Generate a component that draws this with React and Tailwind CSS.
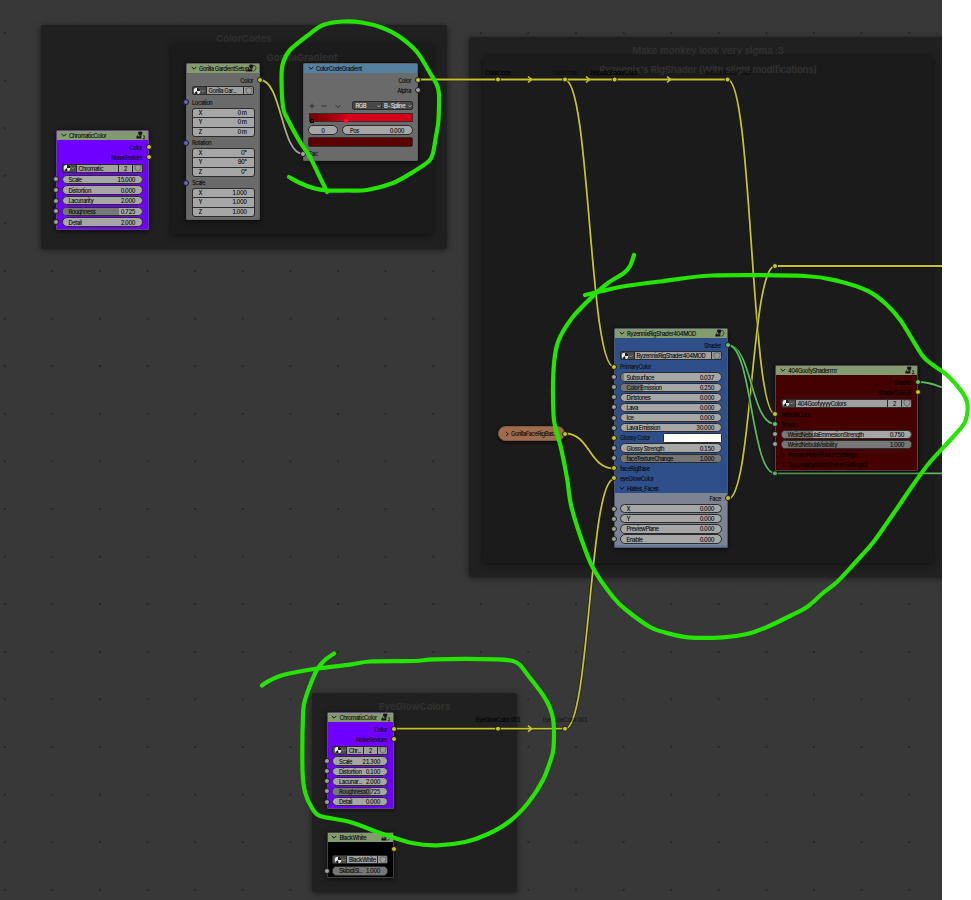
import React from "react";

const DOT_COLORS = {
  yellow: "bg-[#c7c729]",
  grey: "bg-[#a1a1a1]",
  green: "bg-[#63c763]",
  violet: "bg-[#6363c7]",
};

function Socket({ side = "left", color = "grey" }) {
  return (
    <span
      className={`absolute top-1/2 size-[6px] -translate-y-1/2 rounded-full border border-[#1c1c1c] ${
        side === "left" ? "-left-[4px]" : "-right-[3.5px]"
      } ${DOT_COLORS[color]}`}
    />
  );
}

function Chevron({ className = "size-[6px]", right = false }) {
  return (
    <svg viewBox="0 0 6 6" className={`shrink-0 ${className}`} fill="none" stroke="currentColor" strokeWidth="0.9">
      {right ? <path d="M2 0.8 4.2 3 2 5.2" /> : <path d="M0.7 1.9 3 4.2 5.3 1.9" />}
    </svg>
  );
}

function GroupIcon({ badge }) {
  return (
    <svg viewBox="0 0 10 9" className="h-[9px] w-[10px] shrink-0">
      <ellipse cx="4.2" cy="2" rx="2.3" ry="1.4" fill="#151515" />
      <path d="M0.4 5.2h5v2.3h-5zM3 3h2.6v1.6H3z" fill="#151515" />
      <path d="M2 3.4 1.4 5.4M5 3 4.4 6" stroke="#151515" strokeWidth="0.7" />
      {badge ? (
        <path d="M7 5.1q0.9-1 1.7 0q0.3 0.8-1.7 2.8h2.4" fill="none" stroke="#151515" strokeWidth="0.8" />
      ) : (
        <path d="M5.6 1.6q3-0.6 3.4 1.8q0.3 3.4-2.8 4" fill="none" stroke="#2c3424" strokeWidth="0.8" />
      )}
    </svg>
  );
}

function Node({ className, body, head = "bg-[#839b6e]", title, icon, badge, children }) {
  return (
    <section className={`absolute flex flex-col rounded-[1.5px] border border-[#5d5d5d]/70 shadow-[0_1px_5px_rgba(0,0,0,0.7)] ${body} ${className}`}>
      <header className={`flex h-[9px] shrink-0 items-center pb-[1px] pl-[3.5px] ${head}`}>
        <Chevron />
        <span className="ml-[2.5px] flex-1">{title}</span>
        {icon && <span className="-ml-[10px] mr-[2px] flex"><GroupIcon badge={badge} /></span>}
      </header>
      {children}
    </section>
  );
}

function Output({ label, color = "yellow", h = "h-[10px]", tone = "" }) {
  return (
    <div className={`relative flex shrink-0 items-center justify-end pr-[6px] ${h} ${tone}`}>
      {label}
      <Socket side="right" color={color} />
    </div>
  );
}

function Input({ label, color = "yellow", h = "h-[10.15px]", tone = "", children }) {
  return (
    <div className={`relative flex shrink-0 items-center pl-[5px] pr-[5px] ${h} ${tone}`}>
      <Socket color={color} />
      {label}
      {children}
    </div>
  );
}

function Field({ label, value, h = "h-[10.15px]", fill = 0 }) {
  return (
    <div className={`relative flex shrink-0 items-center pl-[4.5px] pr-[5px] ${h}`}>
      <Socket />
      <div className="relative flex h-[9.4px] flex-1 items-center justify-between overflow-hidden rounded-full border border-[#2b2b2b] bg-[#a6a6a6] pl-[6px] pr-[7px]">
        <span className="absolute inset-y-0 left-0 bg-[#767676]" style={{ width: `${fill}%` }} />
        <span className="relative">{label}</span>
        <span className="relative">{value}</span>
      </div>
    </div>
  );
}

function Selector({ name, count, h = "h-[11px]" }) {
  return (
    <div className={`flex shrink-0 items-center pl-[4.5px] pr-[5px] ${h}`}>
      <div className="flex h-[9px] flex-1 items-stretch overflow-hidden rounded-[2px] border border-[#2b2b2b] bg-[#2b2b2b]">
        <span className="flex w-[13px] shrink-0 items-center bg-[#4a4a4a] pl-[0.5px] text-[#bbb]">
          <svg viewBox="0 0 8 8" className="size-[8px] shrink-0">
            <circle cx="4" cy="4" r="3.3" fill="#e8e8e8" />
            <path d="M4 0.7A3.3 3.3 0 0 1 7.3 4L4 4zM4 4L4.6 7.2A3.3 3.3 0 0 1 1.4 6z" fill="#1c1c1c" />
          </svg>
          <Chevron className="size-[4px]" />
        </span>
        <span className="ml-px flex min-w-0 flex-1 items-center overflow-hidden bg-[#a0a0a0] pl-[2px]">{name}</span>
        {count && <span className="ml-px flex w-[13px] min-w-[9px] shrink items-center justify-center bg-[#a0a0a0]">{count}</span>}
        <span className="ml-px flex w-[9px] shrink-0 items-center justify-center bg-[#9a9a9a]">
          <svg viewBox="0 0 8 8" className="size-[8px]">
            <path d="M1 1.2Q3 1.4 4 .6Q5 1.4 7 1.2V4Q6.8 6.2 4 7.4Q1.2 6.2 1 4z" fill="none" stroke="#555" strokeWidth="0.7" />
          </svg>
        </span>
      </div>
    </div>
  );
}

function Vector({ values }) {
  return (
    <div className="mx-[4.5px] flex h-[29px] shrink-0 flex-col gap-px overflow-hidden rounded-[3px] border border-[#2b2b2b] bg-[#2b2b2b]">
      {["X", "Y", "Z"].map((axis, i) => (
        <div key={axis} className="flex flex-1 items-center justify-between bg-[#a6a6a6] pb-[1px] pl-[6px] pr-[7px]">
          <span>{axis}</span>
          <span>{values[i]}</span>
        </div>
      ))}
    </div>
  );
}

function Frame({ className, title, children }) {
  return (
    <div className={`absolute rounded-[2px] text-center text-[9.6px] leading-[12px] font-bold text-[#303030] shadow-[0_1px_6px_rgba(0,0,0,0.55)] ${className}`}>
      {title}
      {children}
    </div>
  );
}

const CURVES = [
  ["yellow", "M565 80C590 80 589 367 614 367"],
  ["yellow", "M728 80C752 80 751 414 775 414"],
  ["yellow", "M565 433.5C590 433.5 589 468.5 614 468.5"],
  ["yellow", "M565 729C590 729 589 479 614 479"],
  ["yellow", "M728 499C752 499 751 266 775 266H942"],
  ["green", "M728 345C752 345 751 424 775 424"],
  ["green", "M728 345C752 345 751 473.3 775 473.3H942"],
  ["green", "M918 382C930 382 936 385 942 387.5"],
  ["yellow", "M418 79.5H728"],
  ["yellow", "M394 728.7H565"],
];

const REROUTES = [
  [498, 79.5], [565, 79.5], [614.7, 79.5], [727.6, 79.5],
  [775, 266], [498, 728.7], [565, 728.7],
];

const ARROWS = [[530, 79.5], [588, 79.5], [669, 79.5], [530, 728.7]];

function Wires() {
  return (
    <svg className="absolute inset-0" width="942" height="900" fill="none">
      <defs>
        <linearGradient id="fac" x1="0" x2="0" y1="0" y2="1">
          <stop offset="0.2" stopColor="#c7c729" />
          <stop offset="0.9" stopColor="#a1a1a1" />
        </linearGradient>
      </defs>
      {CURVES.map(([color, d]) => (
        <g key={d}>
          <path d={d} stroke="#111" strokeOpacity="0.6" strokeWidth="3.4" />
          <path d={d} stroke={color === "green" ? "#5cb85c" : "#c4c42a"} strokeWidth="1.8" />
        </g>
      ))}
      <path d="M260 80C282 80 281 154 303 154" stroke="#111" strokeOpacity="0.6" strokeWidth="3.4" />
      <path d="M260 80C282 80 281 154 303 154" stroke="url(#fac)" strokeWidth="1.8" />
      {ARROWS.map(([x, y]) => (
        <path key={`${x}-${y}`} d={`M${x - 2} ${y - 3}L${x + 1.5} ${y}L${x - 2} ${y + 3}`} stroke="#c7c729" strokeWidth="1.6" />
      ))}
      {REROUTES.map(([x, y]) => (
        <circle key={`${x}-${y}`} cx={x} cy={y} r="2.5" fill="#c7c729" stroke="#1c1c1c" strokeWidth="1" />
      ))}
      <circle cx="775" cy="473.3" r="2.5" fill="#63c763" stroke="#1c1c1c" />
    </svg>
  );
}

const SCRIBBLES = [
  [[289, 177], [300, 183], [313, 188], [327, 190.5], [347, 190.5], [367, 190], [393, 183], [413, 172], [429, 161], [433, 153], [436, 136], [438.5, 120], [438.5, 90], [430, 73], [417, 52], [400, 37], [383, 28], [362, 22.5], [343, 21.5], [323, 25], [307, 36], [290, 50], [283, 63], [281.5, 77], [283, 107], [287, 118], [300, 142], [310, 157], [327, 192]],
  [[634, 255], [630, 266], [624, 273], [608, 283], [592, 297], [572, 318], [558, 342], [553.5, 370], [553.5, 415], [556, 430], [561, 448], [567, 478], [571, 505], [581, 538], [593, 568], [613, 597], [625, 609], [650, 627], [667, 633], [688, 637.3], [723, 637.3], [747, 634], [767, 627], [790, 616], [807, 607], [823, 593], [837, 582], [853, 565], [862, 555], [875, 540], [898, 507], [913, 485], [930, 462], [953, 437], [965, 422], [967.5, 405], [962, 392], [947, 375], [933, 365], [922, 355], [901, 321], [886, 304], [868, 291], [838, 281], [805, 276], [712, 275.5], [660, 281.5], [620, 287], [602, 291], [585, 295]],
  [[262, 685.5], [267, 682], [283, 675], [317, 668.5], [350, 664.7], [370, 661.5], [415, 661], [435, 659.3], [497, 659.3], [513, 661], [520, 665], [527, 674], [543, 695], [550, 708], [553.5, 722], [553.5, 748], [551, 759], [543, 780], [528, 803], [510, 821], [488, 834], [465, 842], [437, 845.3], [412, 843], [383, 834], [350, 822], [320, 816], [312, 808], [305, 792], [302.5, 770], [303, 715], [305, 700], [313, 678], [318, 668], [325, 660], [334, 653.5]],
];

// Catmull-Rom points converted to cubic segments.
function smooth(points) {
  let d = `M${points[0].join(" ")}`;
  for (let i = 0; i < points.length - 1; i++) {
    const a = points[i - 1] || points[i];
    const b = points[i];
    const c = points[i + 1];
    const e = points[i + 2] || c;
    d += `C${b[0] + (c[0] - a[0]) / 7} ${b[1] + (c[1] - a[1]) / 7} ${c[0] - (e[0] - b[0]) / 7} ${c[1] - (e[1] - b[1]) / 7} ${c[0]} ${c[1]}`;
  }
  return d;
}

function Grid() {
  return (
    <svg className="absolute inset-0" width="942" height="900">
      <defs>
        <pattern id="minor" x="3.8" y="32" width="9.52" height="9.52" patternUnits="userSpaceOnUse">
          <rect x="0.5" y="0.5" width="1" height="1" fill="#313131" />
        </pattern>
        <pattern id="major" x="3.8" y="32" width="47.6" height="47.6" patternUnits="userSpaceOnUse">
          <rect width="2" height="2" fill="#262626" />
        </pattern>
      </defs>
      <rect width="942" height="900" fill="url(#minor)" />
      <rect width="942" height="900" fill="url(#major)" />
    </svg>
  );
}

function WireLabel({ className, children }) {
  return <span className={`absolute -translate-x-1/2 -translate-y-1/2 ${className}`}>{children}</span>;
}

export default function App() {
  return (
    <main className="relative h-[900px] w-[971px] overflow-hidden bg-white font-['Inter','Liberation_Sans',sans-serif] text-[5.8px] leading-[7px] font-medium tracking-[-0.45px] whitespace-nowrap text-[#080808] tabular-nums">
      <div className="relative h-[900px] w-[942px] overflow-hidden bg-[#383838]">
        <Grid />

        <Frame title="ColorCodes" className="left-[41px] top-[25px] h-[224px] w-[406px] bg-[#202020]/97 pt-[8px] tracking-[0px]">
          <Frame title="GorillaGradient" className="left-[130px] top-[19px] h-[190px] w-[262px] bg-[#1b1b1b] pt-[8px] tracking-[0px]" />
        </Frame>
        <Frame title="Make monkey look very sigma :3" className="left-[469px] top-[37px] h-[540px] w-[478px] bg-[#202020]/97 pt-[8px] tracking-[-0.08px]">
          <Frame title="Ryzennix's RigShader (With slight modifications)" className="left-[14px] top-[19px] h-[507px] w-[450px] bg-[#1b1b1b] pt-[8px] tracking-[-0.27px]" />
        </Frame>
        <Frame title="EyeGlowColors" className="left-[312px] top-[693px] h-[199px] w-[205px] bg-[#202020]/97 pt-[8px] tracking-[0px]" />

        <Wires />

        <WireLabel className="left-[498px] top-[72px] text-black">ColorCode</WireLabel>
        <WireLabel className="left-[565px] top-[72px] text-black/60">ColorCode</WireLabel>
        <WireLabel className="left-[614px] top-[72px] text-black">NebulaShaderColor</WireLabel>
        <WireLabel className="left-[728px] top-[72px] text-black/60">NebulaShaderColor</WireLabel>
        <WireLabel className="left-[498px] top-[719px] text-black">EyeGlowColor.001</WireLabel>
        <WireLabel className="left-[565px] top-[719px] text-black/60">EyeGlowColor.001</WireLabel>

        <Node title="ChromaticColor" icon badge body="bg-[#6f00ff]" className="left-[56px] top-[130px] h-[100px] w-[93px]">
          <div className="h-[2px] shrink-0" />
          <Output label="Color" />
          <Output label="NoiseTexture" />
          <Selector name="Chromatic" count="2" h="h-[12px]" />
          <Field label="Scale" value="15.000" h="h-[10.7px]" />
          <Field label="Distortion" value="0.000" h="h-[10.7px]" />
          <Field label="Lacunarity" value="2.000" h="h-[10.7px]" />
          <Field label="Roughness" value="0.725" fill={71} h="h-[10.7px]" />
          <Field label="Detail" value="2.000" h="h-[10.7px]" />
        </Node>

        <Node title="Gorilla GardientSetup" icon body="bg-[#6a6a6a]" className="left-[186px] top-[63px] h-[157px] w-[74px]">
          <div className="h-[2px] shrink-0" />
          <Output label="Color" />
          <Selector name="Gorilla Gar..." h="h-[11px]" />
          <Input label="Location" color="violet" h="h-[12px]" />
          <Vector values={["0 m", "0 m", "0 m"]} />
          <Input label="Rotation" color="violet" h="h-[11px]" />
          <Vector values={["0°", "90°", "0°"]} />
          <Input label="Scale" color="violet" h="h-[11px]" />
          <Vector values={["1.000", "1.000", "1.000"]} />
        </Node>

        <Node title="ColorCodeGradient" head="bg-[#55809f]" body="bg-[#6a6a6a]" className="left-[303px] top-[63px] h-[98px] w-[115px]">
          <div className="h-[2px] shrink-0" />
          <Output label="Color" />
          <Output label="Alpha" color="grey" />
          <div className="mt-[5px] flex h-[11px] shrink-0 items-center pl-[5px] pr-[4px]">
            <svg viewBox="0 0 34 8" className="h-[8px] w-[34px] shrink-0" fill="none" stroke="#2a2a2a" strokeWidth="0.9">
              <path d="M3 1.5v5M0.5 4h5M12.5 4h5M26.5 3l2.5 2.5L31.5 3" />
            </svg>
            <div className="ml-[9px] flex h-[8.5px] flex-1 gap-px overflow-hidden rounded-[2px] border border-[#2b2b2b] bg-[#2b2b2b] text-[#e4e4e4]">
              <span className="flex w-[28px] items-center justify-between bg-[#484848] pl-[2.5px]">RGB<Chevron className="size-[4px]" /></span>
              <span className="flex flex-1 items-center justify-between bg-[#484848] pl-[2px]">B-Spline<Chevron className="size-[4px]" /></span>
            </div>
          </div>
          <div className="relative mx-[4.5px] mt-[1.5px] h-[9.5px] shrink-0 border border-[#3a2a2a] bg-linear-to-r from-[#6a0000] to-[#d60018] to-36%">
            <span className="absolute -bottom-[1.5px] left-0 size-[4px] border-[0.5px] border-black bg-[#6a0000]" />
            <span className="absolute -bottom-[1.5px] left-[34.5px] size-[4px] rounded-t-full bg-[#ff1030]" />
          </div>
          <div className="mt-[3px] flex h-[10px] shrink-0 gap-[4px] pl-[4px] pr-[4px]">
            <span className="flex w-[30px] items-center justify-center rounded-full border border-[#2b2b2b] bg-[#a6a6a6]">0</span>
            <span className="flex flex-1 items-center justify-between rounded-full border border-[#2b2b2b] bg-[#a6a6a6] pl-[7px] pr-[8px]">
              <span>Pos</span>
              <span>0.000</span>
            </span>
          </div>
          <div className="mx-[4px] mt-[2px] h-[10px] shrink-0 rounded-[2px] border border-[#2b2b2b] bg-[#5c0000]" />
          <Input label="Fac" color="grey" h="mt-[1px] h-[11px]" />
        </Node>

        <Node title="RyzennixRigShader404MOD" icon body="bg-[#2f4f8b]" className="left-[614px] top-[328px] h-[220px] w-[114px]">
          <div className="h-[2px] shrink-0" />
          <Output label="Shader" color="green" />
          <Selector name="RyzennixRigShader404MOD" h="h-[11px]" />
          <Input label="PrimaryColor" h="h-[11px]" />
          <Field label="Subsurface" value="0.037" fill={3} />
          <Field label="Color Emission" value="0.250" fill={22} />
          <Field label="Dirtstones" value="0.000" />
          <Field label="Lava" value="0.000" />
          <Field label="Ice" value="0.000" />
          <Field label="Lava Emission" value="30.000" />
          <Input label="Glossy Color">
            <span className="ml-auto h-[9.4px] w-[59px] rounded-[1.5px] border border-[#2b2b2b] bg-white" />
          </Input>
          <Field label="Glossy Strength" value="0.150" />
          <Field label="faceTextureChange" value="1.000" fill={100} />
          <Input label="faceRigBase" />
          <Input label="eyeGlowColor" />
          <div className="flex h-[9px] shrink-0 items-center gap-[2px] pl-[4px]"><Chevron />Hatles_Faces</div>
          <div className="flex flex-1 flex-col bg-[#7c8494]">
            <Output label="Face" h="h-[11px]" />
            <Field label="X" value="0.000" />
            <Field label="Y" value="0.000" />
            <Field label="PreviewPlane" value="0.000" />
            <Field label="Enable" value="0.000" />
          </div>
          <div className="h-[2px] shrink-0 bg-[#6478a0]" />
        </Node>

        <Node title="404GoofyShaderrrrr" icon badge body="bg-[#450000]" className="left-[775px] top-[365px] h-[106px] w-[143px]">
          <div className="h-[2px] shrink-0" />
          <Output label="Shader" color="green" tone="text-black" />
          <Output label="ShaderToRGB" tone="text-black" />
          <Selector name="404GoofyyyyColors" count="2" h="h-[12px]" />
          <Input label="NebulaColor" tone="text-black" />
          <Input label="Shader" color="green" tone="text-black" />
          <Field label="WeirdNebulaEmmesionStrength" value="0.750" fill={24} />
          <Field label="WeirdNebulaVisibility" value="1.000" fill={100} />
          <div className="flex h-[10px] shrink-0 items-center gap-[2px] pl-[4px] text-black"><Chevron right />PrimaryNoiseTextureSettings</div>
          <div className="flex h-[10px] shrink-0 items-center gap-[2px] pl-[4px] text-black"><Chevron right />SecondaryNoiseTextureSettings2</div>
        </Node>

        <Node title="ChromaticColor" icon badge body="bg-[#6f00ff]" className="left-[326.5px] top-[712px] h-[97px] w-[67.5px]">
          <div className="h-[2px] shrink-0" />
          <Output label="Color" />
          <Output label="NoiseTexture" />
          <Selector name="Chr..." count="2" h="h-[12px]" />
          <Field label="Scale" value="21.300" />
          <Field label="Distortion" value="0.100" />
          <Field label="Lacunar..." value="2.000" />
          <Field label="Roughness" value="0.725" fill={71} />
          <Field label="Detail" value="0.000" />
        </Node>

        <Node title="BlackWhite" icon body="bg-black" className="left-[326.5px] top-[832px] h-[46px] w-[67.5px]">
          <div className="h-[2px] shrink-0" />
          <Output label="" />
          <Selector name="BlackWhite" h="h-[11px]" />
          <Field label="SkibidiSl..." value="1.000" fill={100} h="h-[12px]" />
        </Node>

        <section className="absolute left-[498px] top-[426px] flex h-[15px] w-[67px] items-center rounded-full border border-[#7d5a45] bg-[#a06c4c] pl-[5px] shadow-[0_1px_4px_rgba(0,0,0,0.7)]">
          <Chevron right />
          <span className="ml-[1px]">GorillaFaceRigBas...</span>
          <Socket side="right" color="yellow" />
        </section>
      </div>

      <svg className="pointer-events-none absolute inset-0" width="971" height="900" fill="none" stroke="#25e400" strokeWidth="4.2" strokeLinecap="round" strokeLinejoin="round">
        {SCRIBBLES.map((points, i) => (
          <path key={i} d={smooth(points)} />
        ))}
      </svg>
    </main>
  );
}
